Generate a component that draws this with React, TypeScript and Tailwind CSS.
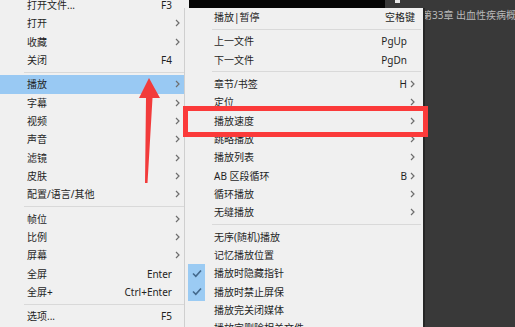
type Item =
  | 'sep'
  | {
      t: string
      k?: string
      s?: boolean
      hl?: boolean
      chk?: boolean
      wide?: boolean
    }

const leftItems: Item[] = [
  {t: '打开文件...', k: 'F3'},
  {t: '打开', s: true},
  {t: '收藏', s: true},
  {t: '关闭', k: 'F4'},
  'sep',
  {t: '播放', s: true, hl: true},
  {t: '字幕', s: true},
  {t: '视频', s: true},
  {t: '声音', s: true},
  {t: '滤镜', s: true},
  {t: '皮肤', s: true},
  {t: '配置/语言/其他', s: true},
  'sep',
  {t: '帧位', s: true},
  {t: '比例', s: true},
  {t: '屏幕', s: true},
  {t: '全屏', k: 'Enter'},
  {t: '全屏+', k: 'Ctrl+Enter'},
  'sep',
  {t: '选项...', k: 'F5'},
]

const subItems: Item[] = [
  {t: '播放|暂停', k: '空格键', wide: true},
  'sep',
  {t: '上一文件', k: 'PgUp'},
  {t: '下一文件', k: 'PgDn'},
  'sep',
  {t: '章节/书签', k: 'H', s: true},
  {t: '定位', s: true},
  {t: '播放速度', s: true},
  {t: '跳略播放', s: true},
  {t: '播放列表', s: true},
  {t: 'AB 区段循环', k: 'B', s: true},
  {t: '循环播放', s: true},
  {t: '无缝播放', s: true},
  'sep',
  {t: '无序(随机)播放'},
  {t: '记忆播放位置'},
  {t: '播放时隐藏指针', chk: true},
  {t: '播放时禁止屏保', chk: true},
  {t: '播放完关闭媒体'},
  {t: '播放完删除相关文件'},
]

const Chevron = () => (
  <svg width="5" height="8" viewBox="0 0 5 8" className="block">
    <path d="M1 1 L4 4 L1 7" fill="none" stroke="#6e6e6e" strokeWidth="1.2" />
  </svg>
)

const Check = () => (
  <svg width="10" height="9" viewBox="0 0 10 9" className="block">
    <path d="M1 4.5 L3.8 7.3 L9 1.5" fill="none" stroke="#44698c" strokeWidth="1.6" />
  </svg>
)

const font = {fontFamily: '"Noto Sans", "Noto Sans CJK SC", sans-serif'}

const LeftMenu = () => (
  <div className="w-[184px] shrink-0 bg-[#f0f0f0] h-full">
    <div className="-mt-[4px]">
      {leftItems.map((it, i) =>
        it === 'sep' ? (
          <div key={i} className="h-[6px] flex items-center pl-[24px]">
            <div className="h-px w-full bg-[#d9d9d9]" />
          </div>
        ) : (
          <div
            key={i}
            className={
              'h-[18.33px] flex items-center pl-[27px] text-[10px] text-[#1f1f1f] ' +
              (it.hl ? 'bg-[#99c9f3]' : '')
            }
          >
            <span className="flex-1 leading-none">{it.t}</span>
            {it.k && <span className="leading-none">{it.k}</span>}
            <span className="w-[12px] pl-[3px] flex items-center">
              {it.s && <Chevron />}
            </span>
          </div>
        ),
      )}
    </div>
  </div>
)

const SubMenu = () => (
  <div className="w-[239px] shrink-0 bg-[#f0f0f0] border-l border-[#cfcfcf] h-full">
    {subItems.map((it, i) =>
      it === 'sep' ? (
        <div key={i} className="h-[6px] flex items-center pl-[27px] pr-[2px]">
          <div className="h-px w-full bg-[#d9d9d9]" />
        </div>
      ) : (
        <div
          key={i}
          className="h-[18.33px] flex items-center text-[10px] text-[#1f1f1f]"
        >
          <div className="w-[29px] h-full pl-[3px]">
            {it.chk && (
              <div className="w-[17px] h-full bg-[#9bcbf3] flex items-center justify-center">
                <Check />
              </div>
            )}
          </div>
          <span className="flex-1 leading-none whitespace-nowrap">{it.t}</span>
          {it.k && (
            <span className={'leading-none ' + (it.wide ? '-mr-[8px]' : '')}>
              {it.k}
            </span>
          )}
          <span className="w-[16px] pl-[3px] flex items-center">
            {it.s && <Chevron />}
          </span>
        </div>
      ),
    )}
  </div>
)

export default function App() {
  return (
    <div
      className="relative w-[515px] h-[327px] overflow-hidden bg-[#393939] flex"
      style={font}
    >
      <LeftMenu />
      <div className="flex-1 flex flex-col h-full">
        <div className="h-[8px] shrink-0 flex">
          <div className="w-[5px] bg-[#f0f0f0]" />
          <div className="w-[196px] bg-[#050505]" />
          <div className="flex-1 bg-[#393939] pl-[10px]">
            <div className="w-[5px] h-[3px] bg-[#e8e8e8]" />
          </div>
        </div>
        <div className="flex-1 flex min-h-0">
          <SubMenu />
          <div className="w-[2px] bg-[#262626]" />
          <div className="flex-1 overflow-hidden">
            <div className="-ml-[3px] mt-[1px] text-[10px] leading-[12px] text-[#b9b9b9] whitespace-nowrap">
              第33章 出血性疾病概述
            </div>
          </div>
        </div>
      </div>

      {/* highlight frame */}
      <div className="absolute left-[183px] top-[106px] w-[245px] h-[31px] border-[5px] border-[#fb3a3a]" />

      {/* arrow */}
      <svg
        className="absolute left-0 top-0 pointer-events-none"
        width="515"
        height="327"
        viewBox="0 0 515 327"
      >
        <polygon
          points="149,78 160,98 152.5,98 147.5,183 145,183 146,98 139,98"
          fill="#f23b3b"
        />
      </svg>
    </div>
  )
}
